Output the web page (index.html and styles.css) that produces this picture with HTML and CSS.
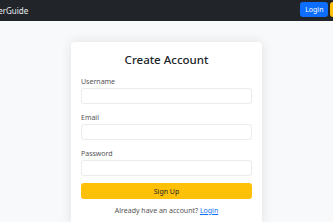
FILE: index.html
```html
<!DOCTYPE html>
<html lang="en">
  <head>
    <meta charset="UTF-8" />
    <title>Create Account</title>
    <link rel="stylesheet" href="styles.css">
  </head>
  <body>
    <nav class="navbar">
      <div class="nav-inner">
        <a class="brand" href="#">CareerGuide</a>
        <div class="nav-buttons">
          <a class="btn btn-blue" href="#">Login</a>
          <a class="btn btn-yellow" href="#">Sign Up</a>
        </div>
      </div>
    </nav>

    <div class="card">
      <h2>Create Account</h2>
      <form>
        <div class="field">
          <label for="username">Username</label>
          <input type="text" id="username" />
        </div>
        <div class="field">
          <label for="email">Email</label>
          <input type="email" id="email" />
        </div>
        <div class="field">
          <label for="password">Password</label>
          <input type="password" id="password" />
        </div>
        <button type="submit" class="submit">Sign Up</button>
      </form>
      <p class="switch">Already have an account? <a href="#">Login</a></p>
    </div>
  </body>
</html>
```

FILE: styles.css
```css
body {
  font-family: "Noto Sans", sans-serif;
  background-color: #f8f9fa;
  color: #212529;
  margin: 0;
  padding: 0;
  overflow: hidden;
}

.navbar {
  background-color: #212529;
  height: 21px;
  overflow: hidden;
}

.nav-inner {
  display: flex;
  justify-content: space-between;
  align-items: center;
  margin-left: -19px;
  margin-right: -33px;
  height: 21px;
}

.brand {
  color: #e9ecef;
  font-size: 8px;
  text-decoration: none;
}

.nav-buttons {
  display: flex;
  gap: 2px;
  margin-top: -2px;
}

.btn {
  display: block;
  font-size: 7px;
  line-height: 15px;
  padding: 0 5px;
  border-radius: 3px;
  text-decoration: none;
}

.btn-blue {
  background-color: #0d6efd;
  color: white;
}

.btn-yellow {
  background-color: #ffc107;
  color: #212529;
}

.card {
  width: 171px;
  margin: 21px auto 0;
  background-color: white;
  padding: 10px;
  border-radius: 4px;
  box-shadow: 0 0 12px rgba(0, 0, 0, 0.1);
}

h2 {
  font-size: 11.5px;
  font-weight: 500;
  line-height: 16px;
  text-align: center;
  margin: 0 0 9px;
}

.field {
  margin-bottom: 9px;
}

.field label {
  display: block;
  font-size: 7px;
  line-height: 9px;
  color: #555;
  margin-bottom: 2px;
}

.field input {
  display: block;
  box-sizing: border-box;
  width: 100%;
  height: 16px;
  border: 1px solid #e9ecef;
  border-radius: 3px;
  padding: 0 4px;
}

.submit {
  display: block;
  width: 100%;
  height: 16px;
  margin-top: -2px;
  border: none;
  border-radius: 3px;
  background-color: #ffc107;
  color: #212529;
  font-family: "Noto Sans", sans-serif;
  font-size: 7px;
  cursor: pointer;
}

.switch {
  font-size: 7px;
  line-height: 9px;
  text-align: center;
  color: #555;
  margin: 7px 0 0;
}

.switch a {
  color: #0d6efd;
}
```
